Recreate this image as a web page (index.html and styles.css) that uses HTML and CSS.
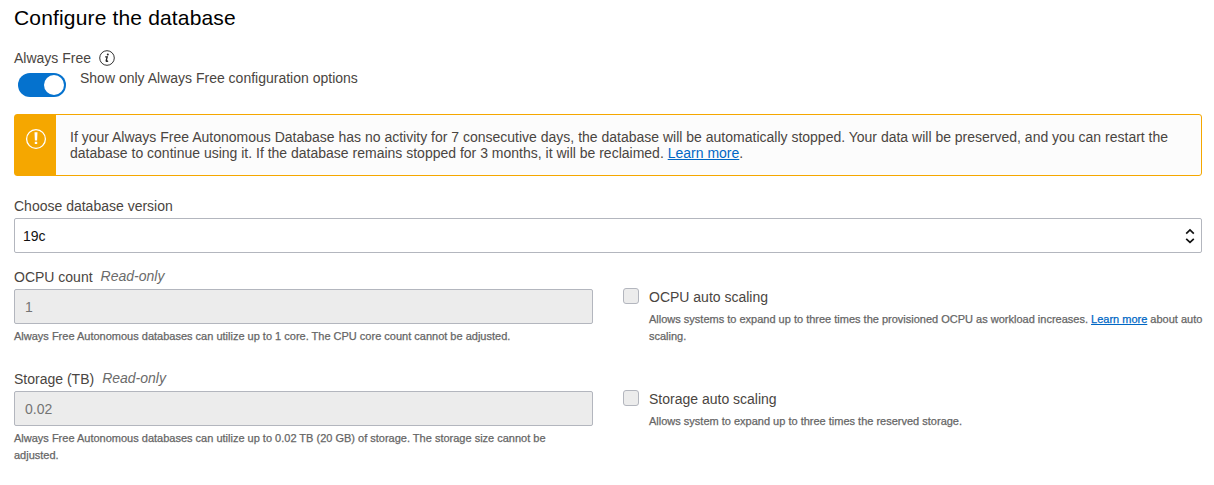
FILE: index.html
```html
<!DOCTYPE html>
<html lang="en">
<head>
<meta charset="utf-8">
<title>Configure the database</title>
<link rel="stylesheet" href="styles.css">
</head>
<body>
<main class="page">
  <h1 class="title">Configure the database</h1>
  <div class="free-label"><span>Always Free</span>
    <svg width="16" height="16" viewBox="0 0 16 16"><circle cx="8" cy="8" r="7.3" fill="none" stroke="#333"/><circle cx="8.8" cy="4.5" r="1" fill="#222"/><path d="M6.2 6.9h2L7.2 10.7q-.2 1.2 1.9.2" fill="none" stroke="#222" stroke-width="1.3"/></svg>
  </div>
  <div class="toggle-row"><span class="toggle"><span class="knob"></span></span><span>Show only Always Free configuration options</span></div>
  <section class="alert">
    <div class="alert-icon"><svg width="22" height="22" viewBox="0 0 22 22"><circle cx="11" cy="11" r="9.4" fill="none" stroke="#fff" stroke-width="1.3"/><path d="M9.5 4.2h3l-.4 8.3H9.9zM9.8 13.8h2.4V16H9.8z" fill="#fff"/></svg></div>
    <p class="alert-text">If your Always Free Autonomous Database has no activity for 7 consecutive days, the database will be automatically stopped. Your data will be preserved, and you can restart the<br>database to continue using it. If the database remains stopped for 3 months, it will be reclaimed. <a class="link">Learn more</a>.</p>
  </section>
  <div class="label version-label">Choose database version</div>
  <div class="select"><span>19c</span><svg width="10" height="16" viewBox="0 0 10 16"><path d="M1.2 5.6 5 2l3.8 3.6M1.2 10.8 5 14.4l3.8-3.6" fill="none" stroke="#111" stroke-width="1.7"/></svg></div>
  <div class="grid">
    <div class="field">
      <div class="label"><span>OCPU count</span><em>Read-only</em></div>
      <div class="input">1</div>
      <p class="hint">Always Free Autonomous databases can utilize up to 1 core. The CPU core count cannot be adjusted.</p>
    </div>
    <div class="option">
      <span class="box"></span>
      <div><div class="option-label">OCPU auto scaling</div>
      <p class="hint">Allows systems to expand up to three times the provisioned OCPU as workload increases. <a class="link">Learn more</a> about auto<br>scaling.</p></div>
    </div>
    <div class="field">
      <div class="label"><span>Storage (TB)</span><em>Read-only</em></div>
      <div class="input">0.02</div>
      <p class="hint">Always Free Autonomous databases can utilize up to 0.02 TB (20 GB) of storage. The storage size cannot be<br>adjusted.</p>
    </div>
    <div class="option">
      <span class="box"></span>
      <div><div class="option-label">Storage auto scaling</div>
      <p class="hint">Allows system to expand up to three times the reserved storage.</p></div>
    </div>
  </div>
</main>
</body>
</html>
```
FILE: styles.css
```css
* { box-sizing: border-box; }
body { margin: 0; background: #fff; color: #4a4541; font: 14px/16px "Liberation Sans", Arial, sans-serif; overflow: hidden; }
.page { width: 1214px; height: 485px; padding: 6px 12px 0 14px; white-space: nowrap; }
h1, p { margin: 0; }
.title { font-size: 21px; line-height: 24px; font-weight: 400; letter-spacing: .16px; color: #000; }
.free-label { display: flex; align-items: center; gap: 8px; height: 16px; margin-top: 20px; }
.toggle-row { display: flex; height: 32px; padding: 4px 0 0 4px; gap: 14px; }
.toggle { width: 48px; height: 24px; border-radius: 12px; background: #0572ce; margin-top: 3px; padding: 2px; display: flex; justify-content: flex-end; }
.knob { width: 20px; height: 20px; border-radius: 50%; background: #fff; }
.alert { display: flex; height: 62px; margin-top: 16px; border: 1px solid #f5a700; border-radius: 3px; background: #fcfcfc; }
.alert-icon { width: 41px; background: #f5a700; padding: 13px 0 0 10px; }
.alert-text { padding: 14px 0 0 14px; }
.link { color: #0067c5; text-decoration: underline; }
.version-label { margin-top: 22px; }
.select { display: flex; align-items: center; justify-content: space-between; height: 35px; margin-top: 4px; padding: 0 6px 0 8px; border: 1px solid #b3b6be; border-radius: 2px; color: #111; }
.grid { display: grid; grid-template-columns: 579px 1fr; grid-template-rows: 102px 102px; column-gap: 30px; margin-top: 16px; }
.label { display: flex; height: 16px; }
.label em { margin: -1px 0 0 8px; color: #6b6b6b; }
.input { height: 35px; margin-top: 4px; padding: 9px 10px; border: 1px solid #b3b6be; border-radius: 2px; background: #ececec; color: #747474; }
.hint { font-size: 11px; line-height: 17px; color: #666; margin-top: 4px; -webkit-text-stroke: .25px currentColor; }
.option { display: flex; gap: 10px; padding-top: 19px; }
.option-label { padding-top: 1px; }
.option .hint { margin-top: 6px; }
.box { width: 16px; height: 16px; border: 1px solid #b3b6be; border-radius: 3px; background: #ececec; }
```
